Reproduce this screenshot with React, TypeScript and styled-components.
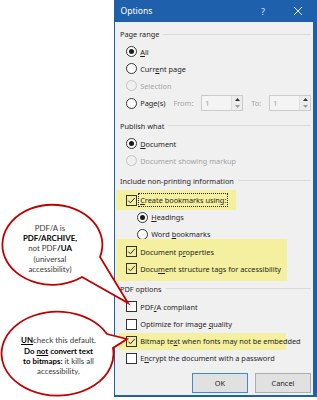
import React from 'react';
import styled, { createGlobalStyle } from 'styled-components';

const Global = createGlobalStyle`
  html, body { margin: 0; padding: 0; background: #ffffff; }
  body { width: 317px; height: 400px; overflow: hidden; }
  #root { width: 317px; height: 400px; }
`;

const BLUE = '#1f60ad';
const HL = '#f4f0a0';
const FONT = `"Noto Sans", "Open Sans", sans-serif`;

const Page = styled.div`
  position: relative;
  width: 317px;
  height: 400px;
  box-sizing: border-box;
  padding-left: 114px;
  display: flex;
  font-family: ${FONT};
`;

const Dialog = styled.div`
  width: 203px;
  height: 397px;
  box-sizing: border-box;
  background: ${BLUE};
  padding: 0 4px 2px 1px;
  display: flex;
  flex-direction: column;
`;

const TitleBar = styled.div`
  height: 22px;
  flex: none;
  margin-right: -4px;
  display: flex;
  align-items: center;
  padding-left: 5.5px;
  color: #ffffff;
  font-size: 8.6px;
`;

const TitleText = styled.span`
  flex: 1;
`;

const HelpGlyph = styled.span`
  width: 10px;
  text-align: center;
  font-size: 9px;
  color: #dfe8f4;
  margin-right: 25px;
`;

const CloseBox = styled.span`
  width: 10px;
  height: 10px;
  margin-right: 14px;
  display: flex;
`;

const Body = styled.div`
  flex: 1;
  background: #f0f0f0;
  box-sizing: border-box;
  padding: 4px 2px 0 5px;
  display: flex;
  flex-direction: column;
  color: #1e1e1e;
  font-size: 7.35px;
`;

const Section = styled.div<{ $top: number }>`
  margin-top: ${(p) => p.$top}px;
  display: flex;
  flex-direction: column;
`;

const GroupLabel = styled.div<{ $gap: number }>`
  height: 16px;
  display: flex;
  align-items: center;
  gap: 4px;
  margin-bottom: ${(p) => p.$gap}px;
  color: #262626;
  &::after {
    content: '';
    flex: 1;
    height: 1px;
    background: #dadada;
  }
`;

const Row = styled.div<{ $indent?: number }>`
  height: 17.2px;
  display: flex;
  align-items: center;
  padding-left: ${(p) => p.$indent ?? 6.2}px;
  white-space: nowrap;
`;

const Highlight = styled.div<{ $left: number; $width: number; $pt: number; $pb: number }>`
  background: ${HL};
  box-sizing: border-box;
  width: ${(p) => p.$width}px;
  margin: ${(p) => -p.$pt}px 0 ${(p) => -p.$pb}px ${(p) => -p.$left}px;
  padding: ${(p) => p.$pt}px 0 ${(p) => p.$pb}px ${(p) => p.$left}px;
`;

const RadioCircle = styled.span<{ $on?: boolean; $disabled?: boolean }>`
  width: 11px;
  height: 11px;
  box-sizing: border-box;
  border-radius: 50%;
  border: 1px solid ${(p) => (p.$disabled ? '#c4c4c4' : '#333333')};
  background: ${(p) => (p.$disabled ? '#f0f0f0' : '#ffffff')};
  display: flex;
  align-items: center;
  justify-content: center;
  flex: none;
  margin-right: 3px;
  &::after {
    content: '';
    width: 5px;
    height: 5px;
    border-radius: 50%;
    background: ${(p) => (p.$on ? '#1a1a1a' : 'transparent')};
  }
`;

const CheckSquare = styled.span<{ $hl?: boolean }>`
  width: 11px;
  height: 11px;
  box-sizing: border-box;
  border: 1px solid #333333;
  background: ${(p) => (p.$hl ? 'transparent' : '#ffffff')};
  display: flex;
  flex: none;
  margin-right: 3px;
`;

const Label = styled.span<{ $disabled?: boolean; $focus?: boolean }>`
  color: ${(p) => (p.$disabled ? '#a3a3a3' : '#1e1e1e')};
  outline: ${(p) => (p.$focus ? '1px dotted #202020' : 'none')};
  outline-offset: 1px;
  u {
    text-decoration-thickness: 1px;
    text-underline-offset: 1px;
  }
`;

const FieldLabel = styled.span<{ $ml: number }>`
  color: #a3a3a3;
  margin-left: ${(p) => p.$ml}px;
  margin-right: 0;
  width: ${(p) => (p.$ml > 0 ? 'auto' : 'auto')};
`;

const SpinField = styled.div<{ $ml: number }>`
  margin-left: ${(p) => p.$ml}px;
  width: 43px;
  height: 16px;
  box-sizing: border-box;
  border: 1px solid #cbcbcb;
  background: #f4f4f4;
  display: flex;
`;

const SpinValue = styled.span`
  flex: 1;
  padding-left: 3px;
  color: #a3a3a3;
  display: flex;
  align-items: center;
`;

const SpinButtons = styled.div`
  width: 10px;
  border-left: 1px solid #dedede;
  display: flex;
  flex-direction: column;
  background: #ececec;
`;

const SpinHalf = styled.span`
  flex: 1;
  display: flex;
  align-items: center;
  justify-content: center;
`;

const ButtonRow = styled.div`
  margin-top: 6px;
  display: flex;
  justify-content: flex-end;
  gap: 7px;
`;

const DialogButton = styled.button<{ $default?: boolean }>`
  width: 56px;
  height: 20px;
  box-sizing: border-box;
  border: 1px solid ${(p) => (p.$default ? '#3c8ad6' : '#adadad')};
  background: #e1e1e1;
  font-family: ${FONT};
  font-size: 7.35px;
  color: #1e1e1e;
  padding: 0;
  display: flex;
  align-items: center;
  justify-content: center;
`;

const Overlay = styled.svg`
  position: absolute;
  left: 0;
  top: 0;
  width: 317px;
  height: 400px;
  pointer-events: none;
  z-index: 2;
`;

const BubbleText = styled.div<{ $left: number; $top: number; $width: number }>`
  position: absolute;
  left: ${(p) => p.$left}px;
  top: ${(p) => p.$top}px;
  width: ${(p) => p.$width}px;
  z-index: 3;
  text-align: center;
  font-family: Lato, "Open Sans", sans-serif;
  font-size: 7.9px;
  line-height: 10.3px;
  color: #3a3a3a;
  b {
    color: #000000;
    font-weight: 700;
  }
  u {
    text-decoration-thickness: 1px;
    text-underline-offset: 1px;
  }
`;

const Radio = ({ on, disabled, label, indent }: { on?: boolean; disabled?: boolean; label: React.ReactNode; indent?: number }) => (
  <Row $indent={indent}>
    <RadioCircle $on={on} $disabled={disabled} />
    <Label $disabled={disabled}>{label}</Label>
  </Row>
);

const CheckMark = () => (
  <svg width="9" height="9" viewBox="0 0 9 9">
    <path d="M1.3 4.6 L3.4 6.8 L7.8 1.9" fill="none" stroke="#2a2a2a" strokeWidth="1" />
  </svg>
);

const Check = ({ on, hl, focus, label }: { on?: boolean; hl?: boolean; focus?: boolean; label: React.ReactNode }) => (
  <Row>
    <CheckSquare $hl={hl}>{on && <CheckMark />}</CheckSquare>
    <Label $focus={focus}>{label}</Label>
  </Row>
);

const Arrow = ({ up }: { up?: boolean }) => (
  <svg width="5" height="3" viewBox="0 0 5 3">
    <path d={up ? 'M0 3 L2.5 0 L5 3 Z' : 'M0 0 L2.5 3 L5 0 Z'} fill={up ? '#333' : '#9a9a9a'} />
  </svg>
);

const Spinner = ({ ml }: { ml: number }) => (
  <SpinField $ml={ml}>
    <SpinValue>1</SpinValue>
    <SpinButtons>
      <SpinHalf>
        <Arrow up />
      </SpinHalf>
      <SpinHalf>
        <Arrow />
      </SpinHalf>
    </SpinButtons>
  </SpinField>
);

export default function App() {
  return (
    <>
      <Global />
      <Page>
        <Dialog>
          <TitleBar>
            <TitleText>Options</TitleText>
            <HelpGlyph>?</HelpGlyph>
            <CloseBox>
              <svg width="10" height="10" viewBox="0 0 10 10">
                <path d="M1 1 L9 9 M9 1 L1 9" stroke="#ffffff" strokeWidth="0.9" />
              </svg>
            </CloseBox>
          </TitleBar>
          <Body>
            <Section $top={0}>
              <GroupLabel $gap={1}>Page range</GroupLabel>
              <Radio on label={<><u>A</u>ll</>} />
              <Radio label={<>Curr<u>e</u>nt page</>} />
              <Radio disabled label="Selection" />
              <Row>
                <RadioCircle />
                <Label>
                  Pa<u>g</u>e(s)
                </Label>
                <FieldLabel $ml={8}>From:</FieldLabel>
                <Spinner ml={8} />
                <FieldLabel $ml={8}>To:</FieldLabel>
                <Spinner ml={8} />
              </Row>
            </Section>
            <Section $top={6}>
              <GroupLabel $gap={1.4}>Publish what</GroupLabel>
              <Radio on label={<><u>D</u>ocument</>} />
              <Radio disabled label="Document showing markup" />
            </Section>
            <Section $top={3}>
              <GroupLabel $gap={3}>Include non-printing information</GroupLabel>
              <Highlight $left={4} $width={120} $pt={2} $pb={1}>
                <Check on hl focus label={<><u>C</u>reate bookmarks using:</>} />
              </Highlight>
              <Radio on indent={17.2} label={<><u>H</u>eadings</>} />
              <Radio indent={17.2} label={<>Word <u>b</u>ookmarks</>} />
              <Highlight $left={4} $width={171} $pt={4} $pb={3.5}>
                <Check on hl label={<>Document p<u>r</u>operties</>} />
                <Check on hl label={<>Docu<u>m</u>ent structure tags for accessibility</>} />
              </Highlight>
            </Section>
            <Section $top={3.3}>
              <GroupLabel $gap={1.5}>PDF options</GroupLabel>
              <Check label={<>PDF<u>/</u>A compliant</>} />
              <Check label={<>Optimize for image <u>q</u>uality</>} />
              <Highlight $left={1.3} $width={167.3} $pt={0} $pb={0}>
                <Check on hl label={<>Bitmap te<u>x</u>t when fonts may not be embedded</>} />
              </Highlight>
              <Check label={<>E<u>n</u>crypt the document with a password</>} />
            </Section>
            <ButtonRow>
              <DialogButton $default>OK</DialogButton>
              <DialogButton>Cancel</DialogButton>
            </ButtonRow>
          </Body>
        </Dialog>

        <Overlay viewBox="0 0 317 400">
          <path
            d="M82 277 A50 40 0 1 1 100 257 L128 303 Z"
            fill="#ffffff"
            stroke="#c00000"
            strokeWidth="1.8"
            strokeLinejoin="miter"
          />
          <path
            d="M113 348 A56 42 0 1 1 107 334 L127 339 Z"
            fill="#ffffff"
            stroke="#c00000"
            strokeWidth="1.8"
            strokeLinejoin="miter"
          />
        </Overlay>
        <BubbleText $left={0} $top={222.9} $width={100}>
          PDF/A is
          <br />
          <b>PDF/ARCHIVE,</b>
          <br />
          not PDF<b>/UA</b>
          <br />
          (universal
          <br />
          accessibility)
        </BubbleText>
        <BubbleText $left={0} $top={335.3} $width={117}>
          <b>
            <u>UN</u>
          </b>
          check this default.
          <br />
          <b>
            Do <u>not</u> convert text
          </b>
          <br />
          <b>to bitmaps:</b> it kills all
          <br />
          accessibility.
        </BubbleText>
      </Page>
    </>
  );
}
